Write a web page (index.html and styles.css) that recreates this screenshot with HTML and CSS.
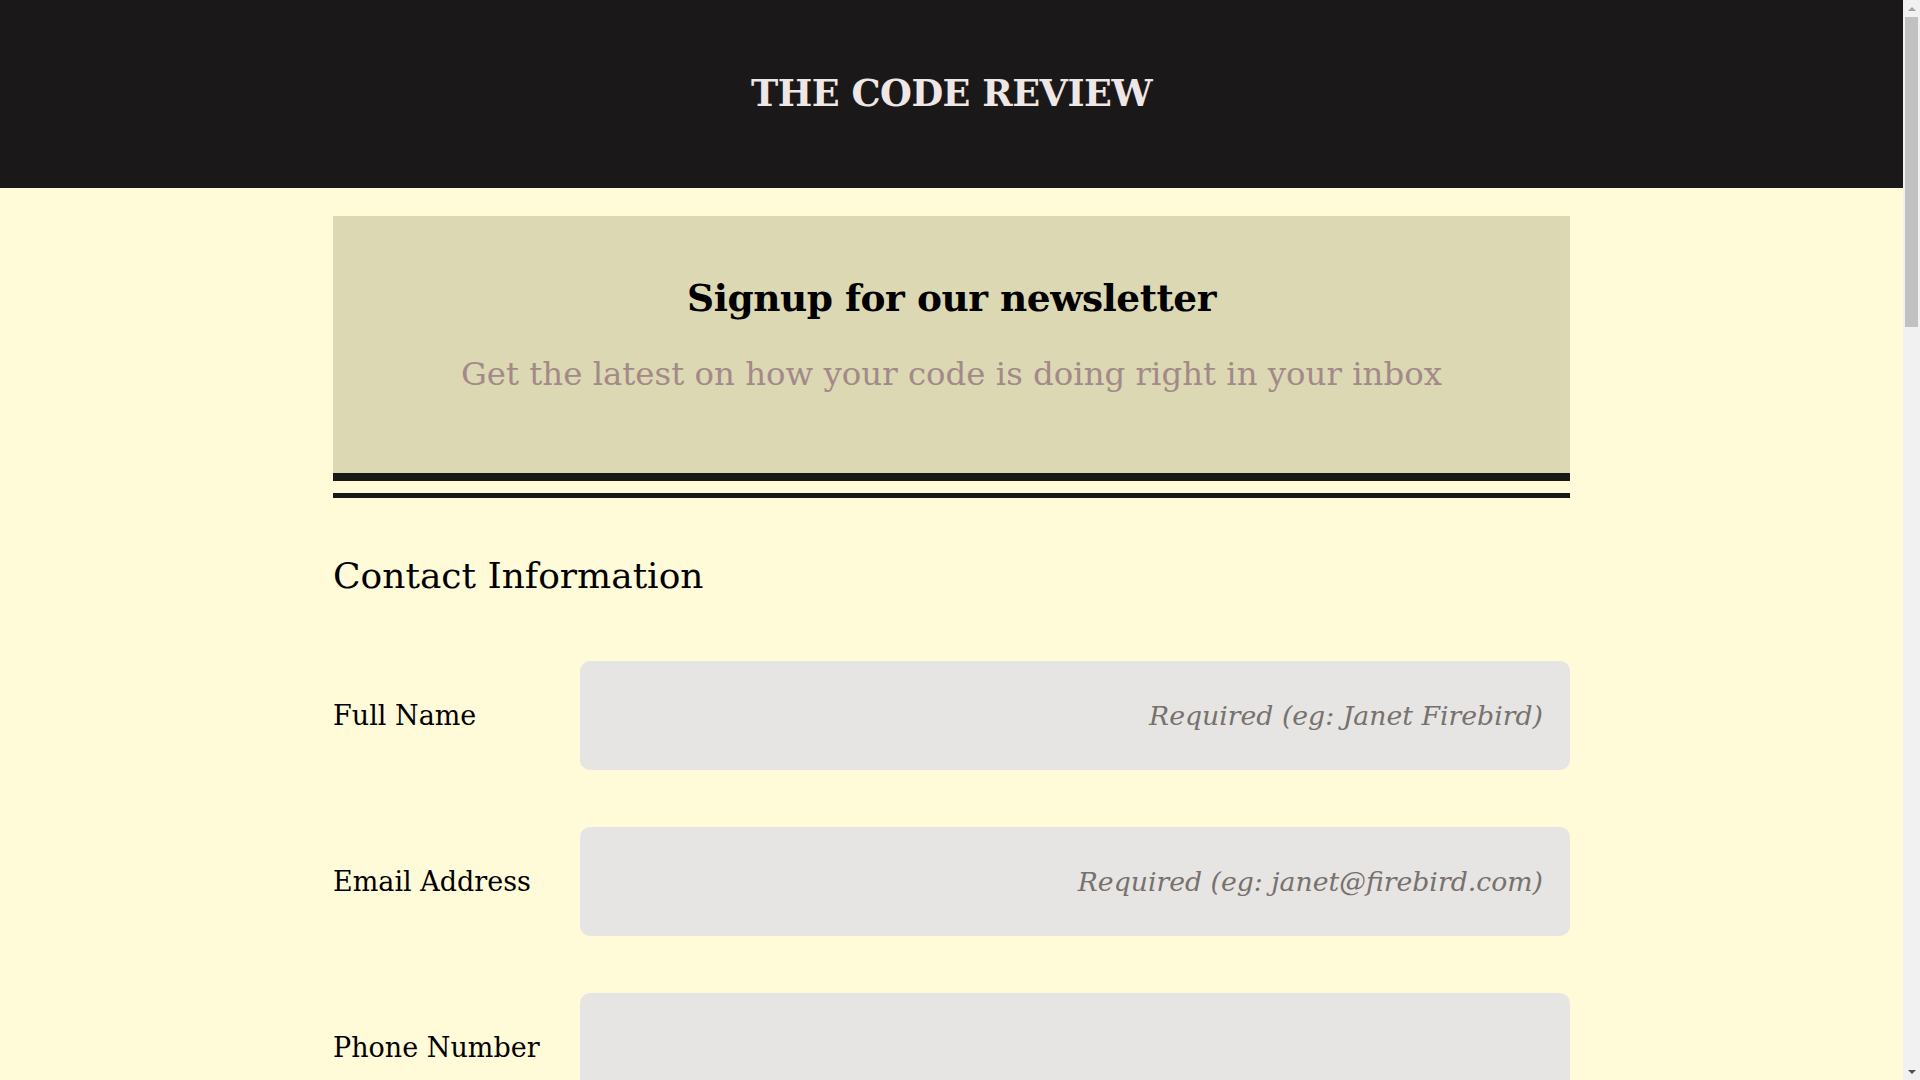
FILE: index.html
```html
<!DOCTYPE html>
<html lang="en">
<head>
<meta charset="utf-8">
<title>The Code Review</title>
<link rel="stylesheet" href="styles.css">
</head>
<body>
<header class="site-header">
  <h1 class="site-title">THE CODE REVIEW</h1>
</header>
<main class="container">
  <section class="banner">
    <h2 class="banner-title">Signup for our newsletter</h2>
    <p class="banner-sub">Get the latest on how your code is doing right in your inbox</p>
  </section>
  <div class="divider"></div>
  <form class="signup-form">
    <h3 class="section-title">Contact Information</h3>
    <div class="fields">
      <label class="field"><span class="field-label">Full Name</span><input class="field-input" type="text" placeholder="Required (eg: Janet Firebird)"></label>
      <label class="field"><span class="field-label">Email Address</span><input class="field-input" type="email" placeholder="Required (eg: janet@firebird.com)"></label>
      <label class="field"><span class="field-label">Phone Number</span><input class="field-input" type="tel"></label>
      <label class="field"><span class="field-label">Company</span><input class="field-input" type="text"></label>
      <label class="field"><span class="field-label">Job Title</span><input class="field-input" type="text"></label>
    </div>
    <h3 class="section-title">Preferences</h3>
    <div class="fields">
      <label class="field"><span class="field-label">Frequency</span><input class="field-input" type="text" placeholder="Weekly"></label>
      <label class="field"><span class="field-label">Topics</span><input class="field-input" type="text" placeholder="eg: JavaScript, CSS"></label>
      <label class="field"><span class="field-label">Languages</span><input class="field-input" type="text"></label>
    </div>
    <h3 class="section-title">Account</h3>
    <div class="fields">
      <label class="field"><span class="field-label">Username</span><input class="field-input" type="text"></label>
      <label class="field"><span class="field-label">Password</span><input class="field-input" type="password"></label>
      <label class="field"><span class="field-label">Confirm</span><input class="field-input" type="password"></label>
    </div>
    <div class="actions"><button class="submit" type="submit">Sign Up</button></div>
  </form>
</main>
<div class="scrollbar" aria-hidden="true">
  <div class="sb-arrow sb-up"></div>
  <div class="sb-track"><div class="sb-thumb"></div></div>
  <div class="sb-arrow sb-down"></div>
</div>
</body>
</html>
```
FILE: styles.css
```css
html, body {
  margin: 0;
  padding: 0;
}
body {
  background: #fffad8;
  font-family: "DejaVu Serif", serif;
  color: #000;
  padding-right: 17px;
}
.scrollbar {
  position: fixed;
  top: 0;
  right: 0;
  width: 17px;
  height: 100vh;
  background: #f1f1f1;
  display: flex;
  flex-direction: column;
}
.sb-arrow {
  height: 17px;
  flex: none;
  display: flex;
  align-items: center;
  justify-content: center;
}
.sb-arrow::before {
  content: "";
  width: 0;
  height: 0;
  border-left: 4px solid transparent;
  border-right: 4px solid transparent;
}
.sb-up::before {
  border-bottom: 4px solid #a3a3a3;
}
.sb-down::before {
  border-top: 4px solid #505050;
}
.sb-track {
  flex: 1;
  padding: 0 2px;
}
.sb-thumb {
  height: 310px;
  background: #c1c1c1;
}
.site-header {
  height: 188px;
  background: #1b1819;
  display: flex;
  align-items: center;
  justify-content: center;
}
.site-title {
  margin: 0;
  color: #efe6e6;
  font-size: 36.6px;
  font-weight: bold;
  line-height: 1.2;
  letter-spacing: -0.5px;
}
.container {
  width: 65%;
  margin: 28px auto 0;
}
.banner {
  background: #dcd8b4;
  border-bottom: 8px solid #1b1819;
  text-align: center;
  padding-top: 58px;
  box-sizing: content-box;
  height: 199px;
}
.banner-title {
  margin: 0;
  font-size: 37.5px;
  font-weight: bold;
  line-height: 48px;
  letter-spacing: -0.5px;
}
.banner-sub {
  margin: 33px 0 0;
  font-size: 32.4px;
  line-height: 38px;
  color: #a38a89;
}
.divider {
  height: 5px;
  background: #1b1819;
  margin-top: 12px;
}
.section-title {
  margin: 56px 0 0;
  font-size: 36px;
  font-weight: normal;
  line-height: 43px;
}
.fields {
  display: flex;
  flex-direction: column;
  gap: 57px;
  margin-top: 64px;
}
.field {
  display: grid;
  grid-template-columns: 20% 80%;
  align-items: center;
}
.field-label {
  font-size: 27px;
  line-height: 34px;
}
.field-input {
  height: 109px;
  box-sizing: border-box;
  border: none;
  border-radius: 10px;
  background: #e6e5e3;
  padding: 0 27px;
  font-family: "DejaVu Serif", serif;
  font-size: 26.7px;
  font-style: italic;
  text-align: right;
  color: #333;
  outline: none;
}
.field-input::placeholder {
  color: #78716d;
  font-style: italic;
  opacity: 1;
}
.actions {
  display: flex;
  justify-content: flex-end;
  margin: 80px 0 140px;
}
.submit {
  height: 90px;
  padding: 0 60px;
  border: none;
  border-radius: 10px;
  background: #1b1819;
  color: #efe6e6;
  font-family: "DejaVu Serif", serif;
  font-size: 28px;
  font-weight: bold;
}
```
